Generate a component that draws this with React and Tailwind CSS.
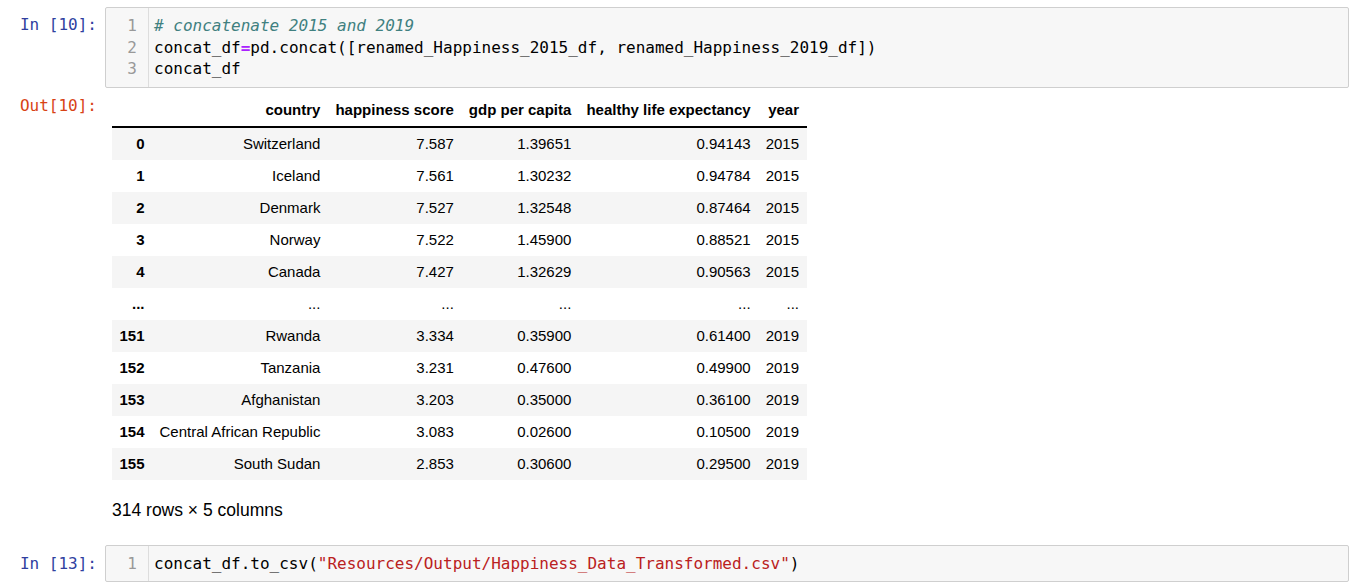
const MONO = { fontFamily: '"DejaVu Sans Mono", monospace' };

const rows = [
  ['0', 'Switzerland', '7.587', '1.39651', '0.94143', '2015'],
  ['1', 'Iceland', '7.561', '1.30232', '0.94784', '2015'],
  ['2', 'Denmark', '7.527', '1.32548', '0.87464', '2015'],
  ['3', 'Norway', '7.522', '1.45900', '0.88521', '2015'],
  ['4', 'Canada', '7.427', '1.32629', '0.90563', '2015'],
  ['...', '...', '...', '...', '...', '...'],
  ['151', 'Rwanda', '3.334', '0.35900', '0.61400', '2019'],
  ['152', 'Tanzania', '3.231', '0.47600', '0.49900', '2019'],
  ['153', 'Afghanistan', '3.203', '0.35000', '0.36100', '2019'],
  ['154', 'Central African Republic', '3.083', '0.02600', '0.10500', '2019'],
  ['155', 'South Sudan', '2.853', '0.30600', '0.29500', '2019'],
];

const headers = ['', 'country', 'happiness score', 'gdp per capita', 'healthy life expectancy', 'year'];

function Prompt({ children, color }) {
  return (
    <div
      className={`w-[105px] shrink-0 pr-[8px] text-right text-[16px] leading-[21.5px] ${color}`}
      style={MONO}
    >
      {children}
    </div>
  );
}

function CodeBox({ lines }) {
  return (
    <div className="flex-1 mr-[13px] flex border border-[#cfcfcf] rounded-[2px] bg-[#f7f7f7] text-[16px] leading-[21.5px]" style={MONO}>
      <div className="w-[43px] shrink-0 border-r border-[#dddddd] pt-[7px] pb-[7px] pr-[11px] text-right text-[#999999]">
        {lines.map((_, i) => <div key={i}>{i + 1}</div>)}
      </div>
      <div className="pl-[5px] pt-[7px] pb-[7px] text-black whitespace-pre">
        {lines.map((l, i) => <div key={i}>{l}</div>)}
      </div>
    </div>
  );
}

export default function App() {
  const cell1 = [
    <span className="italic text-[#408080]">{'# concatenate 2015 and 2019'}</span>,
    <>concat_df<span className="font-bold text-[#aa22ff]">=</span>pd.concat([renamed_Happiness_2015_df, renamed_Happiness_2019_df])</>,
    <>concat_df</>,
  ];
  const cell2 = [
    <>concat_df.to_csv(<span className="text-[#ba2121]">"Resources/Output/Happiness_Data_Transformed.csv"</span>)</>,
  ];

  return (
    <div className="w-full h-[588px] bg-white overflow-hidden">
      <div className="flex pt-[7px]">
        <Prompt color="text-[#303f9f]">
          <div className="pt-[7px]">In&nbsp;[10]:</div>
        </Prompt>
        <CodeBox lines={cell1} />
      </div>

      <div className="flex mt-[6px]">
        <Prompt color="text-[#d84315]">
          <div className="pt-[1px]">Out[10]:</div>
        </Prompt>
        <div className="pl-[7px]" style={{ fontFamily: '"Liberation Sans", Arial, sans-serif' }}>
          <table className="border-collapse text-[15px] leading-[17px] text-black">
            <thead>
              <tr className="border-b-2 border-black">
                {headers.map((h, i) => (
                  <th key={i} className="px-[7.5px] py-[7.5px] text-right font-bold whitespace-nowrap">{h}</th>
                ))}
              </tr>
            </thead>
            <tbody>
              {rows.map((r, i) => (
                <tr key={i} className={i % 2 === 0 ? 'bg-[#f5f5f5]' : 'bg-white'}>
                  {r.map((c, j) => (
                    <td
                      key={j}
                      className={`px-[7.5px] py-[7.5px] text-right whitespace-nowrap ${j === 0 ? 'font-bold' : ''}`}
                    >
                      {c}
                    </td>
                  ))}
                </tr>
              ))}
            </tbody>
          </table>
          <div className="mt-[20px] text-[17.5px] leading-[20px] text-black">314 rows × 5 columns</div>
        </div>
      </div>

      <div className="flex mt-[25px]">
        <Prompt color="text-[#303f9f]">
          <div className="pt-[8px]">In&nbsp;[13]:</div>
        </Prompt>
        <CodeBox lines={cell2} />
      </div>
    </div>
  );
}
